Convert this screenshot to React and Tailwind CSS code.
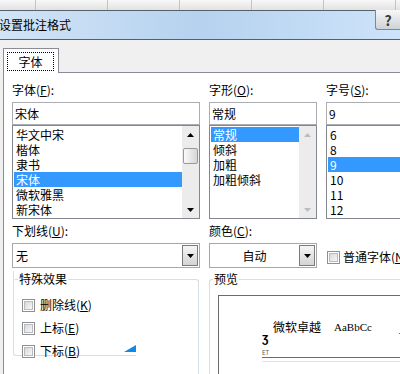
import React from "react";

// Excel "设置批注格式" dialog, font tab
const Arrow = ({ dir = "up", color = "#000" }) => (
  <svg width="7" height="4" viewBox="0 0 7 4">
    <path d={dir === "up" ? "M3.5 0L7 4H0z" : "M0 0H7L3.5 4z"} fill={color} />
  </svg>
);

const ScrollBar = ({ enabled }) => {
  const color = enabled ? "#000" : "#bdbdbd";
  return (
    <div className="flex h-full w-[17px] shrink-0 flex-col bg-[#ececec]">
      <div className="flex h-[17px] items-center justify-center">
        <Arrow dir="up" color={color} />
      </div>
      {enabled && (
        <div className="mx-[1px] mt-[5px] h-[16px] rounded-[2px] border border-[#9a9a9a] bg-linear-to-r from-[#fafafa] to-[#d6d6d6]" />
      )}
      <div className="flex-1" />
      <div className="flex h-[17px] items-center justify-center">
        <Arrow dir="down" color={color} />
      </div>
    </div>
  );
};

const ListBox = ({ items, selected, scroll, thumb }) => (
  <div className="flex h-[94px] w-full border border-[#828790] bg-white">
    <div className="flex-1 overflow-hidden pl-[1px] pt-[1px]">
      {items.map((item) => (
        <div
          key={item}
          className={`h-[15px] whitespace-nowrap pl-[2px] text-[12px] leading-[15px] ${
            item === selected ? "bg-[#3399ff] text-white" : "text-black"
          }`}
        >
          {item}
        </div>
      ))}
    </div>
    {scroll && <ScrollBar enabled={thumb} />}
  </div>
);

const TextBox = ({ value }) => (
  <div className="flex h-[23px] w-full items-center border border-[#abadb3] bg-white pl-[2px] text-[12px] leading-[15px]">
    {value}
  </div>
);

const Dropdown = ({ value, center }) => (
  <div className="flex h-[25px] w-full items-center border border-[#a7a7a7] bg-white">
    <div className={`flex-1 text-[12px] leading-[15px] ${center ? "text-center" : "pl-[3px]"}`}>
      {value}
    </div>
    <div className="mr-[1px] flex h-[21px] w-[16px] items-center justify-center border border-[#7b7b7b] bg-linear-to-b from-[#f6f6f6] to-[#d4d4d4]">
      <Arrow dir="down" />
    </div>
  </div>
);

const CheckBox = () => (
  <div className="h-[13px] w-[13px] shrink-0 border border-[#8f8f8f] bg-white p-[1px]">
    <div className="h-full w-full border border-[#b8bcc1] bg-linear-to-br from-[#d6d9dd] to-[#f7f7f7]" />
  </div>
);

const Label = ({ text, keyChar }) => (
  <div className="mb-[4px] whitespace-nowrap text-[12px] leading-[16px]">
    {text}(<span className="underline">{keyChar}</span>):
  </div>
);

const CheckRow = ({ text, keyChar, children }) => (
  <div className="flex h-[16px] items-center gap-[5px] whitespace-nowrap text-[12px] leading-[16px]">
    <CheckBox />
    <span>
      {text}(<span className="underline">{keyChar}</span>)
    </span>
    {children}
  </div>
);

export default function App() {
  return (
    <div className="h-[374px] w-[400px] overflow-hidden bg-[#f0f0f0] font-['Noto_Sans_CJK_SC','Liberation_Sans',sans-serif] text-black">
      {/* sheet column headers behind the dialog */}
      <div className="flex h-[10px] bg-linear-to-b from-[#f8f8f8] to-[#e2e2e2]">
        <div className="w-[36px] border-r border-[#c3c3c3]" />
        <div className="w-[72px] border-r border-[#c3c3c3]" />
        <div className="w-[72px] border-r border-[#c3c3c3]" />
        <div className="w-[72px] border-r border-[#c3c3c3]" />
        <div className="w-[72px] border-r border-[#c3c3c3]" />
        <div className="w-[72px] border-r border-[#c3c3c3]" />
        <div className="flex-1" />
      </div>
      <div className="h-px bg-[#56616c]" />

      {/* title bar */}
      <div className="flex h-[28px] items-start justify-between bg-linear-to-r from-[#d2e4f6] via-[#b6d2ef] to-[#cde3f9]">
        <div className="-ml-[1px] mt-[6px] text-[12px] leading-[16px]">设置批注格式</div>
        <div className="-mt-px flex h-[20px] w-[25px] items-center justify-center rounded-bl-[3px] border-b border-l border-[#7d8896] bg-linear-to-b from-[#f7f7f7] to-[#cdd3d9] text-[14px] font-bold leading-none text-[#3a3a3a]">
          ?
        </div>
      </div>
      <div className="h-px bg-[#5e5e5e]" />

      {/* tab strip */}
      <div className="pl-[3px] pt-[8px]">
        <div className="flex h-[25px]">
          <div className="w-[56px] border-l border-r border-t border-[#898c95] bg-white pl-[3px] pt-[3px]">
            <div className="flex h-[19px] w-[47px] items-center justify-center border border-dotted border-black text-[12px] leading-[16px]">
              字体
            </div>
          </div>
          <div className="flex-1 border-b border-[#898c95]" />
        </div>

        {/* tab page */}
        <div className="h-[320px] border-l border-[#898c95] bg-white pl-[8px] pt-[9px]">
          <div className="flex gap-[9px]">
            <div className="w-[188px] shrink-0">
              <Label text="字体" keyChar="F" />
              <TextBox value="宋体" />
              <ListBox
                items={["华文中宋", "楷体", "隶书", "宋体", "微软雅黑", "新宋体"]}
                selected="宋体"
                scroll
                thumb
              />
            </div>
            <div className="w-[108px] shrink-0">
              <Label text="字形" keyChar="O" />
              <TextBox value="常规" />
              <ListBox items={["常规", "倾斜", "加粗", "加粗倾斜"]} selected="常规" scroll />
            </div>
            <div className="w-[100px] shrink-0">
              <Label text="字号" keyChar="S" />
              <TextBox value="9" />
              <ListBox items={["6", "8", "9", "10", "11", "12"]} selected="9" />
            </div>
          </div>

          <div className="mt-[4px] flex gap-[9px]">
            <div className="w-[188px] shrink-0">
              <Label text="下划线" keyChar="U" />
              <Dropdown value="无" />
            </div>
            <div className="w-[108px] shrink-0">
              <Label text="颜色" keyChar="C" />
              <Dropdown value="自动" center />
            </div>
            <div className="flex w-[100px] shrink-0 items-start pl-px pt-[26px]">
              <div className="flex items-center gap-[3px] whitespace-nowrap text-[12px] leading-[16px]">
                <CheckBox />
                <span>
                  普通字体(<span className="underline">N</span>)
                </span>
              </div>
            </div>
          </div>

          {/* group boxes */}
          <div className="mt-[11px] flex gap-[10px]">
            <div className="ml-px h-[120px] w-[186px] shrink-0 rounded-t-[3px] border-r border-t border-[#d5dfe5]">
              <div className="h-[85px] w-[123px] rounded-bl-[3px] border-b border-l border-[#d5dfe5]">
                <div className="-mt-[9px] ml-[4px] w-fit bg-white px-px text-[12px] leading-[16px]">
                  特殊效果
                </div>
                <div className="mt-[10px] flex flex-col gap-[7px] pl-[8px]">
                  <CheckRow text="删除线" keyChar="K" />
                  <CheckRow text="上标" keyChar="E" />
                  <CheckRow text="下标" keyChar="B">
                    <svg className="-mt-[6px] ml-auto" width="12" height="7" viewBox="0 0 12 7">
                      <path d="M12 0V7H0z" fill="#1289e3" />
                    </svg>
                  </CheckRow>
                </div>
              </div>
            </div>

            <div className="h-[120px] flex-1 rounded-tl-[3px] border-l border-t border-[#d5dfe5]">
              <div className="-mt-[9px] ml-[3px] w-fit bg-white px-px text-[12px] leading-[16px]">
                预览
              </div>
              <div className="ml-[8px] mt-[8px] h-[100px] w-[200px] border border-[#6a6a6a] bg-white pt-[24px]">
                <div className="flex items-start pl-[43px]">
                  <div className="w-[11px] pt-[12px] text-[12px] font-bold leading-[10px]">ʒ</div>
                  <div className="text-[12px] leading-[14px]">微软卓越</div>
                  <div className="ml-[13px] pt-[1px] font-['Liberation_Serif',serif] text-[11px] leading-[13px]">
                    AaBbCc
                  </div>
                  <div className="ml-[27px] text-[12px] leading-[14px]">_</div>
                </div>
                <div className="ml-[43px] mt-[8px] text-[6px] leading-[6px] text-[#555]">ET</div>
                <div className="ml-[43px] mt-[1px] h-px bg-[#6a6a6a]" />
                <div className="ml-[43px] mt-[3px] h-px bg-[#dce3ea]" />
              </div>
            </div>
          </div>
        </div>
      </div>
    </div>
  );
}
